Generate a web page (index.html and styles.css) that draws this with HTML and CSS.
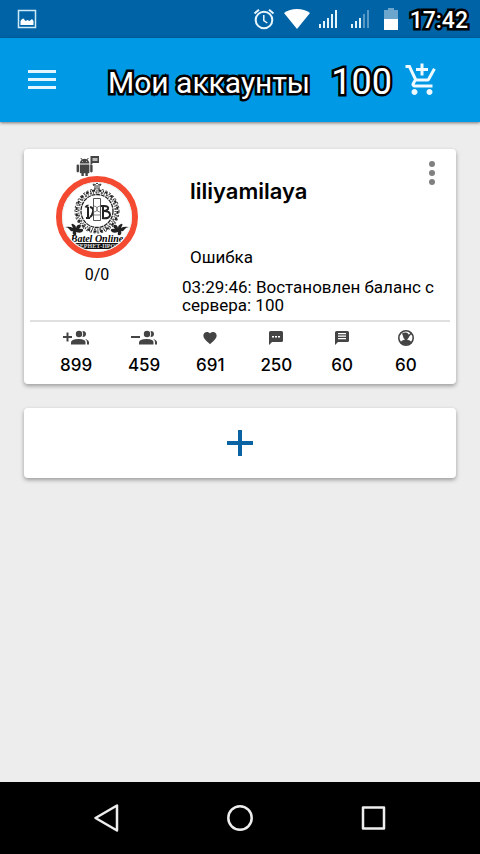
FILE: index.html
```html
<!DOCTYPE html>
<html lang="ru">
<head>
<meta charset="utf-8">
<meta name="viewport" content="width=device-width, initial-scale=1">
<title>Мои аккаунты</title>
<link rel="stylesheet" href="styles.css">
</head>
<body>
<div class="statusbar">
  <svg class="status-image" width="20" height="20" viewBox="0 0 20 20"><path fill="none" stroke="#cdeaf8" stroke-width="1.5" d="M1.500 1.500h17v17h-17z"/><path fill="#fff" d="M3.500 16v-4l1.500-2 1.500-.5 2 2.500 2-1 2 1 2.500-2 1.500 2v4z"/></svg>
  <div class="status-right">
    <svg width="22" height="22" viewBox="0 0 22 22" fill="none" stroke="#e8f6fc"><circle cx="11" cy="12" r="8.300" stroke-width="2"/><path stroke-width="1.500" d="M10.800 7v5.500l3.500 2.500"/><path stroke-width="2" d="M1.500 5.500L6 1.700M20.500 5.500L16 1.700"/></svg>
    <svg width="26" height="22" viewBox="0 0 26 22"><path fill="#fff" d="M13 21L0 5Q5.500 1 13 1t13 4z"/></svg>
    <svg width="20" height="20" viewBox="0 0 20 20" fill="#e4f4fb"><path d="M1 15h2v4H1zM5 12h2v7H5zM9 9h2v10H9zM13 5h2v14h-2zM17 1h2v18h-2z"/></svg>
    <svg width="20" height="20" viewBox="0 0 20 20" fill="#e4f4fb"><path d="M1 15h2v4H1zM5 12h2v7H5zM9 9h2v10H9z"/><path fill="#5798c4" d="M13 5h2v14h-2zM17 1h2v18h-2z"/></svg>
    <svg class="battery" width="14" height="22" viewBox="0 0 14 22"><path fill="#6da6cc" d="M0 2h4V0h6v2h4v9H0z"/><path fill="#fff" d="M0 11h14v11H0z"/></svg>
    <time class="clock outlined">17:42</time>
  </div>
</div>

<header class="appbar">
  <button class="icon-button" aria-label="Меню"><svg width="28" height="22" viewBox="0 0 28 22"><path fill="#e3f5ff" d="M0 1h28v3H0zM0 9h28v3H0zM0 17h28v3H0z"/></svg></button>
  <h1 class="title outlined">Мои аккаунты</h1>
  <span class="balance outlined">100</span>
  <button class="icon-button" aria-label="Пополнить"><svg width="36" height="36" viewBox="0 0 24 24"><path fill="#eefaff" d="M11 9h2V6h3V4h-3V1h-2v3H8v2h3v3zm-4 9c-1.100 0-1.990.9-1.990 2S5.900 22 7 22s2-.9 2-2-.9-2-2-2zm10 0c-1.100 0-1.990.9-1.990 2s.89 2 1.990 2 2-.9 2-2-.9-2-2-2zm-9.830-3.250l.03-.12.9-1.630h7.450c.75 0 1.410-.41 1.750-1.030l3.860-7.010L19.420 4h-.01l-1.100 2-2.760 5H8.530l-.13-.27L6.160 6l-.95-2-.94-2H1v2h2l3.600 7.590-1.350 2.450c-.16.28-.25.61-.25.96 0 1.100.9 2 2 2h12v-2H7.420c-.13 0-.25-.11-.25-.25z"/></svg></button>
</header>

<main class="content">
  <article class="card">
    <div class="account">
      <div class="profile">
        <svg class="robot" width="24" height="20" viewBox="0 0 24 20" fill="#444"><g transform="translate(0 2) scale(.8)"><path d="M6 18c0 .55.45 1 1 1h1v3.500c0 .83.67 1.500 1.500 1.500s1.500-.67 1.500-1.500V19h2v3.500c0 .83.67 1.500 1.500 1.500s1.500-.67 1.500-1.500V19h1c.55 0 1-.45 1-1V8H6v10zM3.500 8C2.670 8 2 8.670 2 9.500v7c0 .83.67 1.500 1.500 1.500S5 17.330 5 16.500v-7C5 8.670 4.330 8 3.500 8zm17 0c-.83 0-1.500.67-1.500 1.500v7c0 .83.67 1.500 1.500 1.500s1.500-.67 1.500-1.500v-7c0-.83-.67-1.500-1.500-1.500zm-4.970-5.840l1.300-1.300c.2-.2.2-.51 0-.71-.2-.2-.51-.2-.71 0l-1.480 1.480C13.850 1.230 12.950 1 12 1c-.96 0-1.860.23-2.660.63L7.850.15c-.2-.2-.51-.2-.71 0-.2.2-.2.51 0 .71l1.310 1.310C6.970 3.260 6 5.010 6 7h12c0-1.990-.97-3.750-2.470-4.840zM10 5H9V4h1v1zm5 0h-1V4h1v1z"/></g><path d="M15.500 0H24v7h-6l-2.500 2z"/><path fill="#bbb" d="M17.500 2h5v3h-5z"/></svg>
        <svg class="avatar" width="82" height="82" viewBox="0 0 82 82">
          <defs><clipPath id="disc"><circle cx="41" cy="41" r="34"/></clipPath></defs>
          <circle cx="41" cy="41" r="38" fill="#fff" stroke="#f44a32" stroke-width="6"/>
          <circle cx="41" cy="41" r="34.500" fill="none" stroke="#eaf0f0"/>
          <g clip-path="url(#disc)">
            <g fill="none" stroke="#222">
              <ellipse cx="41" cy="35" rx="20.500" ry="20.500" stroke-width="2" stroke-dasharray="3 1.500 1 1"/>
              <ellipse cx="41" cy="35" rx="18.500" ry="18.500" stroke="#555" stroke-width="2" stroke-dasharray="1 1.500 2 1"/>
              <ellipse cx="41" cy="35" rx="16" ry="16.500" stroke-width="1.300" stroke-dasharray="4 .7"/>
              <ellipse cx="41" cy="35" rx="22" ry="22" stroke-width="1" stroke-dasharray="2 2"/>
            </g>
            <path fill="none" stroke="#333" d="M38 10l-1-2 2.500.5L41 7l1.500 1.500L45 8l-1 2zM38 12h6"/>
            <g fill="none" stroke="#222" stroke-width="2"><path d="M32 31v11M29.500 31.500q1-2 3-2M34 31q4 1 3 5t-3 5M30 42h4"/><path d="M47 29v13M45 30h3q5 0 4 3-1 2-4 2 6 0 6 4t-8 3"/></g>
            <path fill="#fff" stroke="#555" d="M37.500 22.500h7v22h-7z"/>
            <path fill="none" stroke="#888" d="M38 30q3 0 3 3t-3 3M44 30q-3 0-3 3t3 3M38 39h6"/>
            <path fill="#222" d="M9 51q5-1 8 1-3-5 0-4 3 1 3 4 1-4 4-3 2 1-1 4 5-1 4 2-2 3-7 1 1 4-2 3-2-1-1-4-2 1-3-1-2-3-5-3zM73 51q-5-1-8 1 3-5 0-4-3 1-3 4-1-4-4-3-2 1 1 4-5-1-4 2 2 3 7 1-1 4 2 3 2-1 1-4 2 1 3-1 2-3 5-3z"/>
            <rect x="9" y="67" width="64" height="6" fill="#111"/>
            <text class="logo-name" x="41" y="66" text-anchor="middle">Batel Online</text>
            <text class="logo-sub" x="41" y="72" text-anchor="middle">ИНТЕРНЕТ-ПРОЕКТ</text>
          </g>
        </svg>
        <span class="ratio">0/0</span>
      </div>
      <div class="info">
        <h2 class="name">liliyamilaya</h2>
        <p class="state">Ошибка</p>
        <p class="log">03:29:46: Востановлен баланс с сервера: 100</p>
      </div>
      <button class="icon-button more" aria-label="Ещё"><svg width="6" height="24" viewBox="0 0 6 24" fill="#808080"><circle cx="3" cy="3" r="3"/><circle cx="3" cy="12" r="3"/><circle cx="3" cy="21" r="3"/></svg></button>
    </div>
    <ul class="stats">
      <li><svg width="26" height="16" viewBox="0 0 26 16" fill="#444"><path d="M0 6h3.500V2.500h2V6H9v2H5.500v3.500h-2V8H0z"/><circle cx="16" cy="4" r="3.200"/><path d="M19.500 1q3.500 0 3.500 3t-3.500 3q1.500-3 0-6zM8 14.500V12.500q0-3.500 7.500-3.500t7 3.500v2zM22 9q4 1 4 3.500v2h-2V12q0-2-2-3z"/></svg><span>899</span></li>
      <li><svg width="26" height="16" viewBox="0 0 26 16" fill="#444"><path d="M0 6h9v2H0z"/><circle cx="16" cy="4" r="3.200"/><path d="M19.500 1q3.500 0 3.500 3t-3.500 3q1.500-3 0-6zM8 14.500V12.500q0-3.500 7.500-3.500t7 3.500v2zM22 9q4 1 4 3.500v2h-2V12q0-2-2-3z"/></svg><span>459</span></li>
      <li><svg width="16" height="16" viewBox="0 0 24 24" fill="#444"><path d="M12 21.350l-1.450-1.320C5.400 15.360 2 12.280 2 8.500 2 5.420 4.420 3 7.500 3c1.740 0 3.410.81 4.500 2.090C13.090 3.810 14.760 3 16.500 3 19.580 3 22 5.420 22 8.500c0 3.780-3.400 6.860-8.550 11.540L12 21.350z"/></svg><span>691</span></li>
      <li><svg width="16" height="16" viewBox="0 0 16 16"><path fill="#444" d="M2.500 1h11q1.500 0 1.500 1.500v8q0 1.500-1.500 1.500H4l-3 3V2.500Q1 1 2.500 1z"/><path fill="#fff" d="M4 6h2v1.500H4zM7 6h2v1.500H7zM10 6h2v1.500h-2z"/></svg><span>250</span></li>
      <li><svg width="16" height="16" viewBox="0 0 16 16"><path fill="#444" d="M2.500 1h11q1.500 0 1.500 1.500v8q0 1.500-1.500 1.500H4l-3 3V2.500Q1 1 2.500 1z"/><path fill="#fff" d="M4 3h8v1.200H4zM4 5.500h8v1.200H4zM4 8h8v1.200H4z"/></svg><span>60</span></li>
      <li><svg width="16" height="16" viewBox="0 0 16 16"><circle cx="8" cy="8" r="7.200" fill="none" stroke="#444" stroke-width="1.600"/><path fill="#444" d="M4 3.500q2-1.500 4-1 3 .5 3 3.500 0 2-2 3.500 3 .5 5 3Q11 15 8 15t-6-2.500q2-2.500 5-3Q5 8 5 6z"/><path stroke="#444" stroke-width="1.400" d="M13.300 3L9 8"/></svg><span>60</span></li>
    </ul>
  </article>
  <button class="card add" aria-label="Добавить аккаунт"><svg width="28" height="28" viewBox="0 0 28 28"><path fill="#0a64a4" d="M12 1h4v11h11v4H16v11h-4V16H1v-4h11z"/></svg></button>
</main>

<nav class="navbar">
  <button class="icon-button" aria-label="Назад"><svg width="30" height="30" viewBox="0 0 30 30" fill="none" stroke="#eee" stroke-width="2.500" stroke-linejoin="round"><path d="M3.500 15L25 2.500v25z"/></svg></button>
  <button class="icon-button" aria-label="Домой"><svg width="30" height="30" viewBox="0 0 30 30" fill="none" stroke="#eee" stroke-width="2.500"><circle cx="15" cy="15" r="11.700"/></svg></button>
  <button class="icon-button" aria-label="Обзор"><svg width="30" height="30" viewBox="0 0 30 30" fill="none" stroke="#eee" stroke-width="2.500" stroke-linejoin="round"><path d="M5 4.500h21v21H5z"/></svg></button>
</nav>
</body>
</html>
```
FILE: styles.css
```css
* {
  box-sizing: border-box;
}

body {
  display: flex;
  flex-direction: column;
  min-height: 100vh;
  margin: 0;
  background: #ededed;
  color: #000;
  font-family: Roboto, "Liberation Sans", sans-serif;
}

h1, h2, p, ul {
  margin: 0;
  padding: 0;
}

svg {
  display: block;
  flex: none;
}

.icon-button {
  display: flex;
  padding: 0;
  border: 0;
  background: none;
}

.outlined {
  color: #fff;
  -webkit-text-stroke: 5px #000;
  paint-order: stroke fill;
  stroke-linejoin: round;
}

.statusbar {
  display: flex;
  align-items: center;
  justify-content: space-between;
  height: 38px;
  padding: 0 12px 0 17px;
  background: #0063a6;
}

.status-right {
  display: flex;
  align-items: center;
  gap: 12px;
}

.status-right svg:first-child {
  margin-right: -3px;
}

.status-right svg:nth-child(2) {
  margin-right: -4px;
}

.battery {
  margin-left: 2px;
}

.clock {
  padding-top: 3px;
  font-size: 23px;
  line-height: 28px;
  font-weight: 500;
}

.appbar {
  display: flex;
  align-items: center;
  height: 84px;
  padding: 0 40px 0 28px;
  background: #0099e6;
  box-shadow: 0 1px 3px rgba(0, 0, 0, 0.5);
}

.title {
  margin-left: 52px;
  padding-top: 6px;
  font-size: 30px;
  line-height: 36px;
  font-weight: 400;
}

.balance {
  margin-left: auto;
  margin-right: 12px;
  padding-top: 3px;
  font-size: 36px;
  line-height: 40px;
}

.content {
  flex: 1;
  display: flex;
  flex-direction: column;
  gap: 24px;
  padding: 27px 24px;
}

.card {
  border: 0;
  border-radius: 4px;
  background: #fff;
  box-shadow: 0 2px 4px rgba(0, 0, 0, 0.35);
}

.account {
  display: flex;
  align-items: flex-start;
  position: relative;
  margin: 0 6px;
  padding-bottom: 6px;
  border-bottom: 2px solid #e0e0e0;
}

.profile {
  display: flex;
  flex-direction: column;
  align-items: center;
  flex: none;
  width: 134px;
  padding-top: 7px;
}

.robot {
  margin-right: 20px;
}

.ratio {
  padding-top: 8px;
  font-size: 16px;
  line-height: 18px;
}

.logo-name {
  font: italic bold 10px "Liberation Serif", serif;
}

.logo-sub {
  font: bold 6px "Liberation Serif", serif;
  fill: #ddd;
}

.info {
  flex: 1;
  min-width: 0;
  padding-top: 30px;
  padding-left: 18px;
}

.name {
  padding-left: 8px;
  font: 600 22px/24px Inter, sans-serif;
}

.state {
  padding: 43px 0 0 8px;
  font-size: 17px;
  line-height: 22px;
}

.log {
  padding-top: 10px;
  font-size: 17px;
  line-height: 18px;
}

.more {
  position: absolute;
  top: 12px;
  right: 15px;
}

.stats {
  display: flex;
  justify-content: space-between;
  padding: 8px 36px 8px 36px;
  list-style: none;
}

.stats li {
  display: flex;
  flex-direction: column;
  align-items: center;
  gap: 8px;
  min-width: 28px;
  font: 500 17px/22px Inter, sans-serif;
}

.add {
  display: flex;
  align-items: center;
  justify-content: center;
  padding: 21px;
}

.navbar {
  display: grid;
  grid-template-columns: repeat(3, 1fr);
  justify-items: center;
  align-items: center;
  height: 72px;
  padding: 0 40px;
  background: #000;
}
```
